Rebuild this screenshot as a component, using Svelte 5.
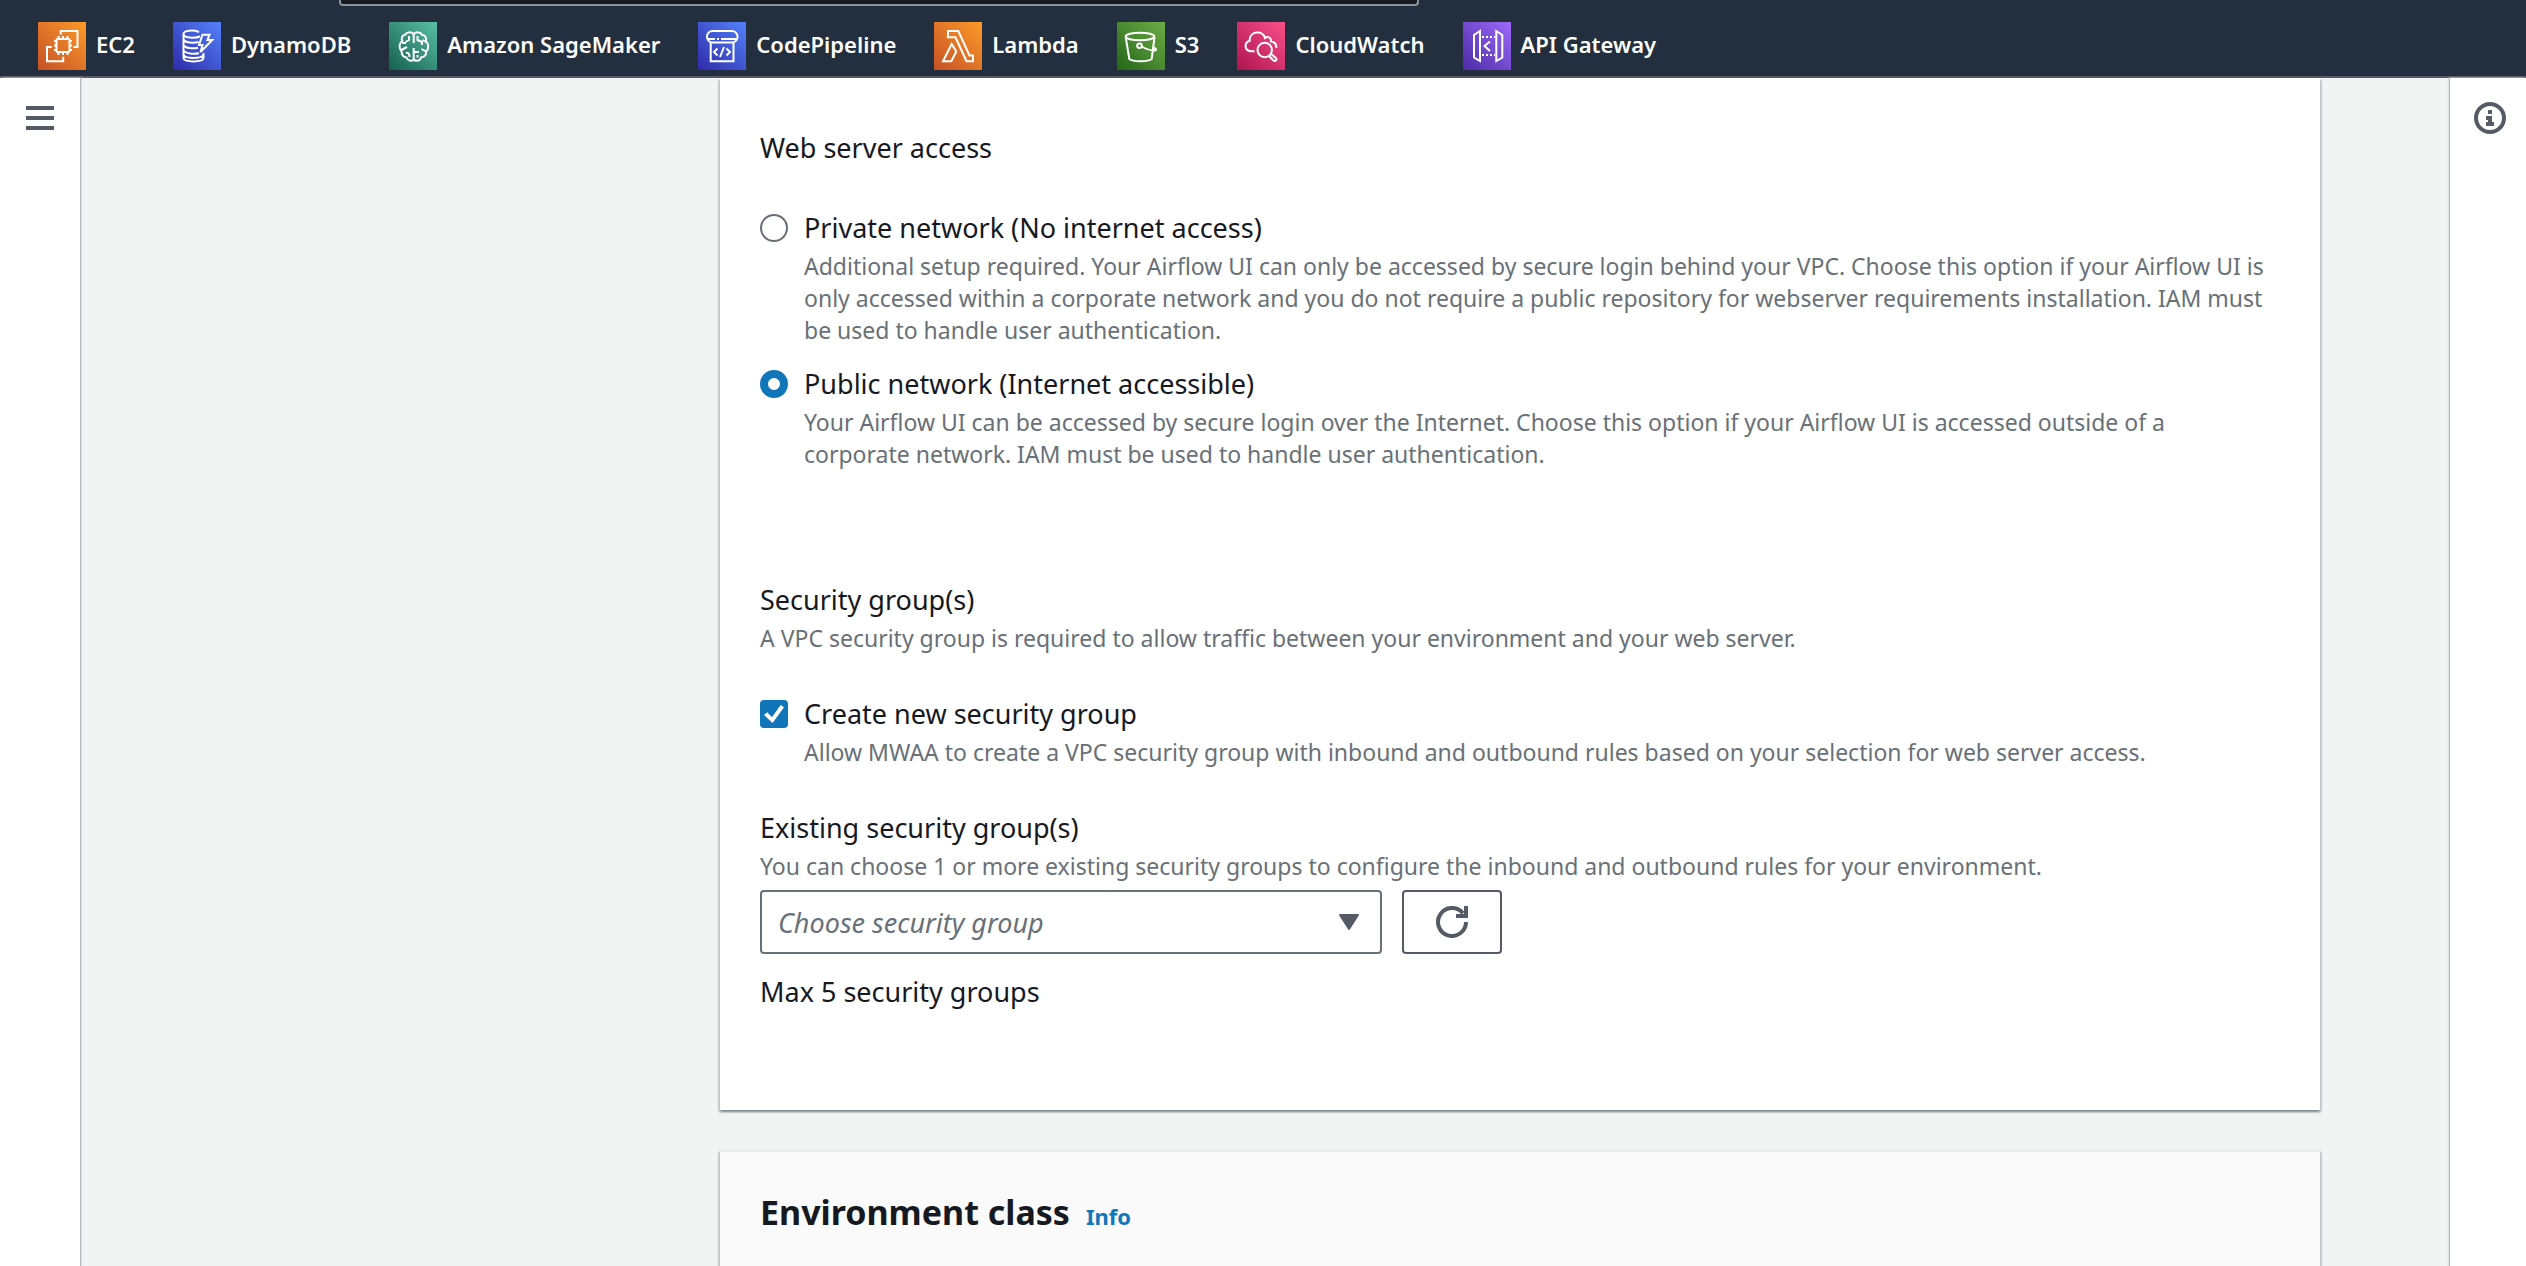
<script>
  const services = [
    { id: 'ec2', name: 'EC2', tone: 'orange' },
    { id: 'dynamo', name: 'DynamoDB', tone: 'blue' },
    { id: 'sagemaker', name: 'Amazon SageMaker', tone: 'teal' },
    { id: 'pipeline', name: 'CodePipeline', tone: 'blue' },
    { id: 'lambda', name: 'Lambda', tone: 'orange' },
    { id: 's3', name: 'S3', tone: 'green' },
    { id: 'cloudwatch', name: 'CloudWatch', tone: 'pink' },
    { id: 'gateway', name: 'API Gateway', tone: 'purple' },
  ];

  const accessOptions = [
    {
      value: 'private',
      label: 'Private network (No internet access)',
      text: 'Additional setup required. Your Airflow UI can only be accessed by secure login behind your VPC. Choose this option if your Airflow UI is only accessed within a corporate network and you do not require a public repository for webserver requirements installation. IAM must be used to handle user authentication.',
    },
    {
      value: 'public',
      label: 'Public network (Internet accessible)',
      text: 'Your Airflow UI can be accessed by secure login over the Internet. Choose this option if your Airflow UI is accessed outside of a corporate network. IAM must be used to handle user authentication.',
    },
  ];

  let access = $state('public');
  let createGroup = $state(true);
  let group = $state('');
</script>

<div class="page">
  <header>
    <div class="search" aria-hidden="true"></div>
    <nav aria-label="Favorite services">
      {#each services as s}
        <a href="#{s.id}">
          <svg class="logo {s.tone}" viewBox="0 0 48 48" aria-hidden="true">
            {#if s.id === 'ec2'}
              <path d="M22.7 12.5V9H39.5V25H35.5M13.7 25H9V39.2H25.2V34.7" />
              <rect x="18.5" y="17" width="13" height="13" rx="1" />
              <path d="M20.500 14v3M25 14v3M29.500 14v3M20.500 30v3M25 30v3M29.500 30v3M16 19h2.500M16 23.500h2.500M16 28h2.500M31.500 19H34M31.500 23.500H34M31.500 28H34" />
            {:else if s.id === 'dynamo'}
              <path d="M26 10C20 7.500 10.500 8.500 10.500 12C10.500 16 22 16.500 27 14.500M10.500 12V36C10.500 40.500 30.500 40.500 30.500 36V31M10.500 17.500C12 21 21 21.200 25.500 20M10.500 23C12 26.500 20 26.700 25 25.700M10.500 28C12 32 22 32.500 26 31M10.500 33C13 37 28 37 30.500 33" />
              <path d="M29.500 12.700H36.500L34.500 18H39.300L27.500 30L29.500 23H26Z" />
            {:else if s.id === 'sagemaker'}
              <path d="M24.700 12C22 9.500 17.500 10 16.500 12.500C13 13 12 16.500 13.200 19C10 21 9.500 26 12.500 29C12.500 33 14.500 35 17.500 35.500C19 39.500 23 39.500 24.700 37.500C26.500 39.500 31 39.500 32 35.500C35.500 35 37.500 33 37 29.500C40 27 40 22 37 19.500C38 16 36 13 33 12.700C31.500 10 27.500 9.500 24.700 12Z" />
              <path d="M24.700 12V21M24.700 37.500V26M20 14V18L16.500 20M13.200 21H17M12.500 28L18 25M17 31C20 30 20.500 33 20.500 35M24.700 30H30M28.500 14V18L33 20V23M37 20L33.500 18M37 29.500L32.500 27M28.500 35.500V33" />
            {:else if s.id === 'pipeline'}
              <rect x="9" y="9" width="30.500" height="11.500" rx="5.500" />
              <path d="M10 17H17M19 17h2M23 17H38M12.700 20.500V39.200H35.500V20.500" />
              <path d="M19.500 26.500L16 30L19.500 33.500M28.500 26.500L32 30L28.500 33.500M26 25L22 35" />
            {:else if s.id === 'lambda'}
              <path d="M14 9H24.300L35.500 33.500H39V39.200H32.500L21.500 15.300H14Z" />
              <path d="M17.700 22L22.300 29.500L17.300 39.200H9Z" />
            {:else if s.id === 's3'}
              <ellipse cx="23" cy="14.500" rx="14.300" ry="3.800" />
              <path d="M8.700 15L12.300 37C16 40 31 40 34.700 37L37.500 15M24.500 24.500C29 27 34 28.500 38 28.500C40 28 39 26.500 36.500 25.500" />
              <circle cx="22.500" cy="23.700" r="2.300" />
            {:else if s.id === 'cloudwatch'}
              <path d="M17.500 29.300H14C7 28.500 7 20.500 12.700 18.800C12 9 25.500 7.500 28 16C31 13.500 34.500 16 34 19.500C38 20 39.500 22.500 39.300 26" />
              <circle cx="27.700" cy="28" r="7.200" />
              <path d="M32 34L36.500 38.500C38.500 40 40.500 37.500 38.800 36L34 31.700" />
            {:else}
              <path d="M17 9V39L11 35.500V13ZM33.300 9V39L39.300 35.500V13ZM27 19.500L21.500 24L27 29" />
              <path d="M19 15H32M19 33H32" stroke-dasharray="2 2" />
            {/if}
          </svg>
          {s.name}
        </a>
      {/each}
    </nav>
  </header>

  <div class="body">
    <aside class="rail">
      <button class="icon" aria-label="Open navigation">
        <svg class="menu" viewBox="0 0 28 24"><path d="M0 2H28M0 12H28M0 22H28" /></svg>
      </button>
    </aside>

    <main>
      <section class="card network">
        <fieldset>
          <legend>Web server access</legend>
          <div class="options">
            {#each accessOptions as o}
              <div class="choice">
                <input type="radio" id={o.value} name="access" value={o.value} bind:group={access} />
                <label for={o.value}>{o.label}</label>
                <p>{o.text}</p>
              </div>
            {/each}
          </div>
        </fieldset>

        <div class="groups">
          <div>
            <h3>Security group(s)</h3>
            <p>A VPC security group is required to allow traffic between your environment and your web server.</p>
          </div>
          <div class="choice">
            <input type="checkbox" id="create-group" bind:checked={createGroup} />
            <label for="create-group">Create new security group</label>
            <p>Allow MWAA to create a VPC security group with inbound and outbound rules based on your selection for web server access.</p>
          </div>
          <div>
            <label for="group">Existing security group(s)</label>
            <p>You can choose 1 or more existing security groups to configure the inbound and outbound rules for your environment.</p>
            <div class="picker">
              <div class="select">
                <select id="group" bind:value={group}>
                  <option value="">Choose security group</option>
                </select>
                <svg viewBox="0 0 22 16" aria-hidden="true"><path d="M2 1H20L11 15Z" /></svg>
              </div>
              <button class="refresh" aria-label="Refresh security groups">
                <svg viewBox="0 0 32 32">
                  <path d="M30 16A14 14 0 1 1 27 7.300" />
                  <path d="M30 0V10H20" />
                </svg>
              </button>
            </div>
            <div class="limit">Max 5 security groups</div>
          </div>
        </div>
      </section>

      <section class="card environment">
        <h2>Environment class</h2>
        <a href="#info">Info</a>
      </section>
    </main>

    <aside class="rail right">
      <button class="icon" aria-label="Open help panel">
        <svg class="info" viewBox="0 0 32 32">
          <circle cx="16" cy="16" r="14" />
          <path d="M14 8H18V12H14ZM12 14H18V20H20V24H12V20H14V18H12Z" />
        </svg>
      </button>
    </aside>
  </div>
</div>

<style>
  :global(body) {
    background: #f2f3f3;
  }
  .page {
    height: 100vh;
    overflow: hidden;
    display: flex;
    flex-direction: column;
    font-family: 'Noto Sans', 'Open Sans', sans-serif;
    font-size: 27px;
    line-height: 44px;
    color: #16191f;
  }
  .page * {
    box-sizing: border-box;
  }
  header {
    flex: none;
    background: #232f3e;
    border-bottom: 2px solid #545b64;
  }
  .search {
    width: 1080px;
    height: 6px;
    margin-left: 339px;
    background: #16191f;
    border: 2px solid #879596;
    border-top: 0;
    border-radius: 0 0 4px 4px;
  }
  nav {
    display: flex;
    gap: 38px;
    padding: 16px 38px 6px;
  }
  nav a {
    display: flex;
    align-items: flex-start;
    gap: 10px;
    height: 48px;
    font-size: 22px;
    font-weight: 600;
    color: #fff;
    text-decoration: none;
    white-space: nowrap;
  }
  .logo {
    width: 48px;
    height: 48px;
    fill: none;
    stroke: #fff;
    stroke-width: 2;
  }
  .orange { background: linear-gradient(45deg, #c65127, #fc9a28); }
  .blue { background: linear-gradient(45deg, #2f2ba8, #5381fb); }
  .teal { background: linear-gradient(45deg, #155f4e, #5abfa6); }
  .green { background: linear-gradient(45deg, #236518, #6fad47); }
  .pink { background: linear-gradient(45deg, #ac144e, #fa5089); }
  .purple { background: linear-gradient(45deg, #4c2ba5, #9d69fa); }

  .body {
    flex: 1;
    min-height: 0;
    display: flex;
  }
  .rail {
    flex: none;
    width: 80px;
    padding-top: 24px;
    background: #fff;
    box-shadow: 1px 0 1px #b4bbbd, 2px 0 2px #dfe3e3;
    display: flex;
    align-items: flex-start;
    justify-content: center;
  }
  .right {
    width: 76px;
    padding-left: 4px;
    box-shadow: -1px 0 1px #b4bbbd, -2px 0 2px #dfe3e3;
  }
  button {
    margin: 0;
    padding: 0;
    background: none;
    border: 0;
    color: #545b64;
    cursor: pointer;
  }
  .icon {
    display: flex;
    align-items: center;
    height: 32px;
  }
  .menu {
    width: 28px;
    height: 24px;
    stroke: currentColor;
    stroke-width: 4;
  }
  .info {
    width: 32px;
    height: 32px;
    fill: currentColor;
  }
  .info circle {
    fill: none;
    stroke: currentColor;
    stroke-width: 4;
  }
  main {
    flex: 1;
    min-width: 0;
    padding: 0 130px 0 640px;
    display: flex;
    flex-direction: column;
    gap: 40px;
  }
  .card {
    padding: 48px 40px 96px;
    background: #fff;
    box-shadow: 0 2px 2px rgba(0, 28, 36, 0.3), 2px 2px 2px rgba(0, 28, 36, 0.15), -2px 2px 2px rgba(0, 28, 36, 0.15);
  }
  fieldset {
    margin: 0;
    padding: 0;
    border: 0;
    min-width: 0;
  }
  legend {
    padding: 0;
  }
  .options {
    display: grid;
    gap: 16px;
    padding-top: 36px;
  }
  .groups {
    display: grid;
    gap: 38px;
    padding-top: 108px;
  }
  .choice {
    display: grid;
    grid-template-columns: 28px 1fr;
    column-gap: 16px;
    align-items: center;
    padding-right: 10px;
  }
  .choice p {
    grid-column: 2;
  }
  label {
    display: block;
  }
  p {
    margin: 0;
    font-size: 23px;
    line-height: 32px;
    color: #687078;
  }
  h3 {
    margin: 0;
    font-size: 27px;
    font-weight: 400;
  }
  input {
    appearance: none;
    width: 28px;
    height: 28px;
    margin: 0;
    background: #fff;
    border: 2px solid #687078;
  }
  input[type='radio'] {
    border-radius: 50%;
  }
  input[type='radio']:checked {
    border: 8px solid #1175ba;
  }
  input[type='checkbox'] {
    display: grid;
    place-items: center;
    border-radius: 4px;
  }
  input[type='checkbox']:checked {
    background: #1175ba;
    border-color: #1175ba;
  }
  input[type='checkbox']:checked::before {
    content: '';
    width: 20px;
    height: 18px;
    background: #fff;
    clip-path: polygon(0 55%, 16% 40%, 40% 68%, 83% 0, 100% 12%, 43% 100%);
  }
  .picker {
    display: flex;
    gap: 20px;
    padding: 8px 0 16px;
  }
  .select {
    display: grid;
    align-items: center;
    flex: 0 1 622px;
  }
  .select > * {
    grid-area: 1 / 1;
  }
  .select svg {
    justify-self: end;
    width: 22px;
    height: 16px;
    margin-right: 22px;
    fill: #545b64;
    stroke: #545b64;
    stroke-width: 2;
    stroke-linejoin: round;
    pointer-events: none;
  }
  select {
    appearance: none;
    width: 100%;
    height: 64px;
    padding: 0 64px 0 16px;
    background: #fff;
    border: 2px solid #687078;
    border-radius: 4px;
    color: #687078;
    font: italic 27px 'Noto Sans', 'Open Sans', sans-serif;
  }
  .refresh {
    display: grid;
    place-items: center;
    width: 100px;
    height: 64px;
    border: 2px solid #545b64;
    border-radius: 4px;
  }
  .refresh svg {
    width: 32px;
    height: 32px;
    fill: none;
    stroke: currentColor;
    stroke-width: 4;
  }
  .environment {
    flex: 1 0 auto;
    display: flex;
    align-items: baseline;
    gap: 16px;
    padding-top: 38px;
    background: #fafafa;
    border-top: 2px solid #eaeded;
  }
  h2 {
    margin: 0;
    font-size: 34px;
    line-height: 44px;
    font-weight: 700;
  }
  .environment a {
    font-size: 22px;
    font-weight: 700;
    color: #1175ba;
    text-decoration: none;
  }
</style>
